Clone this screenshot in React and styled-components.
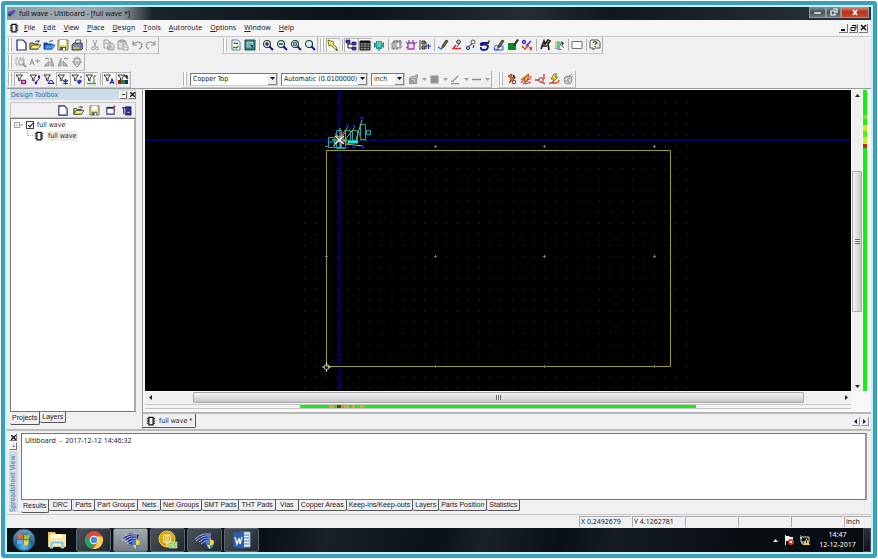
import { useState } from "react";
import styled, { createGlobalStyle, css } from "styled-components";

//All the small drawings of the toolbars, on a 12x12 grid:
const FUNNEL = <path d="M1 2h6.500L5 5v3L3.500 7.500V5z" fill="#fff" stroke="#222" strokeWidth=".9" />;
const PENCIL = <path d="M5 7l4-6 2 1-4 6-2 1z" fill="#6b6b14" stroke="#222" strokeWidth=".7" />;
const LENS = <><circle cx="5" cy="5" r="3.500" fill="#d5eff0" stroke="#233" strokeWidth="1.100" /><path d="M7.500 7.500l3.500 3.500" stroke="#16167a" strokeWidth="2" /></>;
const FOLDER = <><path d="M1 4h3l1 1h4v5H1z" fill="#e8dc4a" stroke="#333" /><path d="M1 10l2-4h9l-3 4z" fill="#f5ee78" stroke="#333" strokeWidth=".8" /><path d="M6 3q2-3 4 0M10 1v2H8" stroke="#333" fill="none" strokeWidth=".8" /></>;

const drawings = {
    page: <path d="M2 1h6l3 3v7H2z" fill="#fff" stroke="#22227c" strokeWidth="1.200" />,
    folder: FOLDER,
    blueFolder: <><path d="M1 4h3l1 1h4v5H1z" fill="#1d4fb8" stroke="#123c95" /><path d="M1 10l2-4h9l-3 4z" fill="#4c9bf0" stroke="#124abf" strokeWidth=".8" /><path d="M6 3q2-2 4-1" stroke="#1758c0" fill="none" /></>,
    save: <><path d="M1 1h10v10H1z" fill="#d8d868" stroke="#777" /><path d="M3 1h6v5H3z" fill="#fff" /><path d="M3 8h6v3H3z" fill="#555" /><path d="M6 9h2v2H6z" fill="#fff" /></>,
    print: <><path d="M4 5l1-4h5L9 5z" fill="#fff" stroke="#333" strokeWidth=".8" /><path d="M1 6l2-2h8l1 2v3l-2 2H1z" fill="#8888a4" stroke="#222" strokeWidth=".8" /><path d="M2 9h6" stroke="#e4e430" strokeWidth="1.200" /><path d="M9 7h2" stroke="#335ccc" /></>,
    cut: <g stroke="#9c9c9c" fill="none"><path d="M4 1l3 7M8 1L5 8" /><circle cx="4" cy="9.500" r="1.500" /><circle cx="8" cy="9.500" r="1.500" /></g>,
    copy: <g stroke="#9c9c9c" fill="#eee"><path d="M1 1h4l2 2v6H1zM5 4h4l2 2v5H5z" /><path d="M6 7h3M6 9h4M2 4h2" /></g>,
    paste: <g stroke="#9c9c9c" fill="#ddd"><path d="M1 2h8v8H1zM3 1h4v2H3z" /><path d="M6 5h3l2 2v4H6z" fill="#eee" /><path d="M7 8h3" /></g>,
    undo: <path d="M2 2v4h4M2 6c2-4 8-4 9 0 0 2-1 3-3 4" stroke="#8e8e8e" fill="none" strokeWidth="1.200" />,
    redo: <path d="M10 2v4H6M10 6C8 2 2 2 1 6c0 2 1 3 3 4" stroke="#9c9c9c" fill="none" strokeWidth="1.200" />,
    refresh: <><path d="M2 1h6l2 2v8H2z" fill="#fff" stroke="#678" /><path d="M4 5q1-2 3 0M8 7q-1 3-4 1" stroke="#0a8a22" fill="none" strokeWidth="1.400" /><path d="M6 5h2V3zM5 8H3v2z" fill="#0a8a22" /></>,
    screen: <><path d="M1 1h10v10H1z" fill="#2f7f7c" stroke="#1d4e50" /><path d="M3 3h6v5H3z" fill="#74b4ac" stroke="#bde" strokeWidth=".7" /><path d="M6 6h3v3z" fill="#234" /></>,
    zoomIn: <>{LENS}<path d="M3 5h4M5 3v4" stroke="#111" strokeWidth="1.200" /></>,
    zoomOut: <>{LENS}<path d="M3 5h4" stroke="#111" strokeWidth="1.200" /></>,
    zoomArea: <>{LENS}<path d="M3.500 3.500h3v3h-3z" fill="#7bb" stroke="#255" strokeWidth=".8" /></>,
    zoomAll: LENS,
    select: <><path d="M1 1l6 2-1 2 4 4-1 2-5-5-2 1z" fill="#f4ec5c" stroke="#5a5a18" strokeWidth=".8" /><path d="M9 11h2" stroke="#111" /></>,
    tree: <><path d="M3 3v6h5M3 5h5" stroke="#111" fill="none" /><path d="M1 1h4v3H1zM7 3h4v3H7zM7 8h4v3H7z" fill="#3a3aa8" stroke="#16165c" strokeWidth=".7" /></>,
    sheet: <><path d="M1 2h10v9H1z" fill="#888" stroke="#111" /><path d="M1 3h10" stroke="#111" strokeWidth="2" /><path d="M1 6h10M1 8.500h10M4 3v8M8 3v8" stroke="#222" strokeWidth=".8" /></>,
    chip: <><path d="M3 2h6v8H3zM1 4h10v4H1z" fill="#23a196" /><path d="M4 3h4v5H4z" fill="#58c8bb" /><path d="M1 4h1M10 4h1M1 8h1M10 8h1M5 11h2" stroke="#246" /></>,
    partGray: <><path d="M1 4l3-2h6v7H4L1 10z" fill="#b4b4b4" stroke="#8c8c8c" /><path d="M3 1v3M6 1v3M9 1v3M3 9v2M6 9v2" stroke="#777" /><path d="M6 4h2v4H6z" fill="#eee" /></>,
    partPink: <><path d="M3 4h6v6H3z" fill="#f5d9f7" stroke="#9c42b8" strokeWidth="1.300" /><path d="M4 1v3M8 1v3M1 3l2 2M9 5l3-2M3 8L1 9" stroke="#60307a" /></>,
    partPlus: <><path d="M1 1v10M3 2h3v3H3zM3 7h3v3H3z" fill="#9a9a38" stroke="#333" /><path d="M6 3h1v7" stroke="#333" fill="none" /><path d="M7 7h5M9.500 5v5" stroke="#2733b8" strokeWidth="1.200" /></>,
    line: <>{PENCIL}<path d="M1 8l3 2 2-2" stroke="#245fd4" fill="none" strokeWidth="1.300" /></>,
    polyRed: <><circle cx="7.500" cy="3" r="2" fill="#aaa" stroke="#555" /><path d="M5 6L2 9.500h8" stroke="#da2727" fill="none" strokeWidth="1.400" /><path d="M8 5L6 8" stroke="#555" /></>,
    link: <><circle cx="8" cy="3" r="2" fill="#eee" stroke="#555" /><path d="M7 5L4 7M9 6L8 9" stroke="#334" /><circle cx="3" cy="9" r="1.700" fill="#7db4d8" stroke="#348" /></>,
    swirl: <><path d="M10 4H4Q1 4 2 6q5-1 7 1 0 4-4 4-4 0-3-3" stroke="#161c8c" fill="none" strokeWidth="1.800" /><path d="M7 5l3-4 1 1-3 4z" fill="#333" /></>,
    shapePen: <>{PENCIL}<path d="M1 10c0-4 4-5 4-2v3z M6 7h4v4H1" stroke="#3c4dca" fill="none" /></>,
    copperPen: <><path d="M1 4h8v7H1z" fill="#078a20" /><path d="M6 6l4-6 2 1-4 6z" fill="#333" /></>,
    netCheck: <><circle cx="3" cy="3" r="1.500" fill="none" stroke="#2222cf" strokeWidth="1.300" /><path d="M10 2L5 7" stroke="#2222cf" strokeWidth="1.300" /><path d="M1 7l3 3 4-4M8 8l3 3M11 8l-2 3" stroke="#e03030" fill="none" strokeWidth="1.300" /></>,
    textPen: <><path d="M2 10L5 2l1 3 3-4 2 1-2 3 1 6M3 7h5" stroke="#181818" fill="none" strokeWidth="1.600" /><path d="M6 7l4-6" stroke="#777730" /></>,
    colors: <><path d="M2 2h3v7H2z" fill="#d6d64a" /><path d="M4 2l4 1-1 6-3 1z" fill="#4cc0cd" /><path d="M8 2l3 2-2 3z" fill="#333" /><path d="M1 9l8 1-2 1z" fill="#3a42c8" /><path d="M7 5l4 4" stroke="#777" /></>,
    rect: <path d="M1 2.500h10v7H1z" fill="#fafafa" stroke="#777" />,
    help: <><path d="M2 1h7l2 2v6H6l-2 2V9H1V2z" fill="#f4f4d8" stroke="#333" strokeWidth=".8" /><path d="M4 4q2-3 4 0-2 1-2 2M6 7v1" stroke="#23234a" fill="none" strokeWidth="1.100" /></>,
    findGray: <g stroke="#9a9a9a" fill="none"><path d="M1 2h8v7H1z" strokeDasharray="2 1" /><circle cx="6" cy="6" r="2.500" /><path d="M8 8l3 3" strokeWidth="2" /></g>,
    aPlus: <path d="M1 9l2-6 2 6M2 7h3M6 5h5M8.500 3v4" stroke="#959595" fill="none" />,
    flipA: <><path d="M1 10h5V5z M8 10V2l3 8z" fill="#bbb" stroke="#8e8e8e" strokeWidth=".8" /><path d="M2 3q2-2 4 0" stroke="#888" fill="none" /></>,
    flipB: <><path d="M1 10l3-8v8zM6 10h5L6 5z" fill="#bbb" stroke="#8e8e8e" strokeWidth=".8" /><path d="M7 3q2-2 4 0" stroke="#888" fill="none" /></>,
    rotate: <g fill="none" stroke="#929292"><path d="M3 3l3-2 3 2v5l-3 3-3-3z" /><path d="M1 6h10M3 3h6M3 8h6" /></g>,
    fPart: <>{FUNNEL}<path d="M6.500 7.500h4v3h-4z" stroke="#8c1c6d" fill="#f3d0e8" strokeWidth="1.300" /></>,
    fNet: <>{FUNNEL}<path d="M10 2v4l-3 3" stroke="#e02f72" fill="none" strokeWidth="1.200" /><circle cx="10" cy="4" r="1.200" fill="#2020c0" /><circle cx="7" cy="10" r="1.400" fill="#2020c0" /></>,
    fPoly: <>{FUNNEL}<path d="M5 10.500l2-3h2l2 3z" stroke="#22229f" fill="#cfd4ff" /></>,
    fVia: <>{FUNNEL}<path d="M8.500 6v5.500M6 7.500l5 3M11 7.500l-5 3" stroke="#1f1fb0" strokeWidth="1.400" /></>,
    fPad: <>{FUNNEL}<path d="M6 8q3-3 5 0l-2 3H7z" fill="#2a36c4" /><path d="M9 4h2" stroke="#1f1fb0" /></>,
    fGreen: <>{FUNNEL}<path d="M11 3H9v7" stroke="#555" fill="none" /><path d="M2 10.500h9" stroke="#18c018" strokeWidth="1.500" /></>,
    fText: <>{FUNNEL}<path d="M7 11l2-5 2 5M8 9.500h3" stroke="#1c1cae" fill="none" strokeWidth="1.100" /></>,
    fColors: <>{FUNNEL}<path d="M7 2l4 4M9 2l2 2" stroke="#333" strokeWidth="1.300" /><path d="M1 7h3v4H1z" fill="#a51616" /><path d="M4 7h4v4H4z" fill="#079326" /><path d="M8 7h3v4H8z" fill="#1a258f" /></>,
    pasteGray: <><path d="M1 4h9v7H1z" fill="#9a9a9a" /><path d="M3 3h4l3-2v3" stroke="#888" fill="none" strokeWidth="1.300" /><path d="M4 6h3v3" stroke="#ddd" fill="none" /></>,
    squareGray: <path d="M2 2h8v8H2z" fill="#909090" stroke="#a8a8a8" />,
    lineGray: <path d="M1 10.500h9M3 8l6-6M1 8h3" stroke="#8c8c8c" strokeWidth="1.400" />,
    dashGray: <path d="M1 6h10" stroke="#8c8c8c" strokeWidth="1.600" />,
    routeA: <><path d="M2 3l4-2-1 3 4 1-6 5 2-4z" fill="#d88a20" stroke="#8a2a14" strokeWidth=".8" /><path d="M7 2l2 3" stroke="#111" strokeWidth="1.500" /><circle cx="8" cy="9" r="1.800" fill="none" stroke="#8a2020" /></>,
    routeB: <><path d="M1 10L6 4M3 11l6-5M5 11l6-2M1 7l8-6M6 4h6M7 6h4" stroke="#e2301f" strokeWidth="1.100" /><path d="M5 4l4-2-2 5-3 2z" fill="#e8c12a" stroke="#863" strokeWidth=".7" /></>,
    routeC: <><path d="M1 7h4M8 9l3 2M10 1v5" stroke="#d93030" strokeWidth="1.300" /><circle cx="7" cy="7" r="2.300" fill="#ddd" stroke="#933" /></>,
    routeD: <><path d="M1 10h6q4 0 4-3" stroke="#e23b2a" fill="none" strokeWidth="1.300" /><path d="M6 1L3 6h3l-2 4 6-6H7l2-3z" fill="#eee03a" stroke="#6d5a12" strokeWidth=".8" /></>,
    routeE: <g stroke="#8f8f8f" fill="#ddd"><circle cx="6" cy="7" r="4" /><path d="M4 5l6-4M5 7l6-4M3 8h4v2" fill="none" /></g>,
    target: <><path d="M2 3h8v7H2z" fill="#fff" stroke="#33338c" strokeWidth="1.200" /><path d="M2 3h8" stroke="#22227c" strokeWidth="2" /><path d="M9 3l2-2" stroke="#d33" strokeWidth="2" /></>,
    treeBlue: <><path d="M1 3h4M3 3v7" stroke="#22227c" strokeWidth="1.300" /><path d="M5 2h6v3H5zM5 6h6v5H5z" fill="#2c2ca8" stroke="#151560" strokeWidth=".8" /><path d="M7 8h2" stroke="#fff" /></>,
    board: <><path d="M3.500 1.500h5v9h-5z" fill="#fff" stroke="#111" strokeWidth="1.500" /><path d="M1 3h2M1 5h2M1 7h2M1 9h2M9 3h2M9 5h2M9 7h2M9 9h2" stroke="#111" /></>,
    logo: <><path d="M1 8l10-6M1 5l9-3M3 10l7-6" stroke="#4453b4" strokeWidth="1.500" /><path d="M1 6h4v3H2z" fill="#262c8c" /></>,
};

const Icon = ({ name, size = 12 }) => (
    <svg width={size} height={size} viewBox="0 0 12 12" fill="none" aria-hidden="true">{drawings[name]}</svg>
);

//A "|" is a separator, a "*" at the end is a pressed button:
const fileTools = ["page", "folder", "blueFolder", "save", "print", "|", "cut", "copy", "paste", "undo", "redo"];
const viewTools = ["refresh", "screen", "|", "zoomIn", "zoomOut", "zoomArea", "zoomAll"];
const mainTools = ["select*", "|", "tree*", "sheet*", "chip", "|", "partGray", "partPink", "partPlus", "|", "line", "polyRed", "link", "swirl", "shapePen", "copperPen", "netCheck", "|", "textPen", "colors", "|", "rect", "|", "help"];
const editTools = ["findGray", "aPlus", "flipA", "flipB", "rotate"];
const filterTools = ["fPart*", "fNet", "fPoly", "fVia*", "fPad*", "fGreen*", "|", "fText*", "fColors*"];
const drawTools = ["pasteGray", "squareGray", "lineGray", "dashGray"];
const routeTools = ["routeA", "routeB", "routeC", "routeD", "routeE"];

const menus = ["File", "Edit", "View", "Place", "Design", "Tools", "Autoroute", "Options", "Window", "Help"];
const sheetTabs = ["Results", "DRC", "Parts", "Part Groups", "Nets", "Net Groups", "SMT Pads", "THT Pads", "Vias", "Copper Areas", "Keep-ins/Keep-outs", "Layers", "Parts Position", "Statistics"];

const Tools = ({ items }) => items.map((item, i) => {
    const name = item.replace("*", "");
    return item === "|"
        ? <Separator key={i} />
        : <ToolButton key={i} aria-label={name} $pressed={item.endsWith("*")}><Icon name={name} /></ToolButton>;
});

const Combo = ({ label, width, options }) => (
    <ComboBox $width={width}>
        <select aria-label={label}>
            {options.map(option => <option key={option}>{option}</option>)}
        </select>
        <ComboArrow><svg width="5" height="3" viewBox="0 0 5 3"><path d="M0 0h5L2.500 3z" fill="#111" /></svg></ComboArrow>
    </ComboBox>
);

const Triangle = ({ dir, color = "#222" }) => {
    const paths = { up: "M0 4h5L2.500 1z", down: "M0 1h5L2.500 4z", left: "M4 0v5L1 2.500z", right: "M1 0v5l3-2.500z" };
    return <svg width="5" height="5" viewBox="0 0 5 5" aria-hidden="true"><path d={paths[dir]} fill={color} /></svg>;
};

const Cross = () => (
    <svg width="5" height="5" viewBox="0 0 5 5" aria-hidden="true"><path d="M0 0l5 5M5 0L0 5" stroke="#111" strokeWidth="1.300" /></svg>
);

//The board: grid dots, outline, crosshair and the parts that are not placed yet.
const BoardCanvas = () => {
    const dots = [];
    for (let row = 0; row < 27; row++) {
        for (let col = 0; col < 36; col++) {
            dots.push(<rect key={`${row}-${col}`} x={159 + col * 10.93} y={12 + row * 10.98} width="1" height="1" />);
        }
    }
    return (
        <svg width="100%" height="100%" role="img" aria-label="Board">
            <g fill="#3c3c3c">{dots}</g>
            <path d="M0 50h2000" stroke="#000064" strokeWidth="2" />
            <path d="M194.500 0v1000" stroke="#000080" strokeWidth="2" />
            <path d="M181.500 60.500h344v216h-344z" stroke="#9c9c2a" fill="none" />
            <g stroke="#777" strokeWidth="1">
                {[290, 399, 509].map(x => [56, 166, 276].map(y => (
                    <path key={`${x}-${y}`} d={`M${x - 1} ${y + .5}h3M${x + .5} ${y - 1}v3`} />
                )))}
                <path d="M180 56.500h3M180 166.500h3" />
            </g>
            <g fill="none" stroke="#12a8b0">
                <path d="M183.500 47.500h6v10h-6zM184 52h5M191.500 51.500h4v7h-4zM196.500 51.500h4v7h-4zM191.500 40.500h5v6h-5z" />
                <path d="M200.500 40.500h5v10h-5zM207.500 40.500h5v10h-5zM215.500 34.500h5v15h-5zM221.500 40.500h4v4h-4z" />
                <path d="M183.500 57.500h18M198 48l4 3" />
                <path d="M203 52h10" stroke="#2fe0c4" strokeWidth="3" />
                <path d="M214 42l2 9M187 50h4v5M218 50h4" stroke="#14944c" />
            </g>
            <path d="M188 56l13-14M190 44l14 10M195 38v21M195 47l8-10M200 50l10-13M211 50l6-20M200 54l18 2M187 50h15" stroke="#b5ae68" fill="none" />
            <path d="M190 46l9 8M199 46l-9 8" stroke="#fff" strokeWidth="1.300" />
            <g fill="#1616b4">
                <circle cx="217" cy="28" r="1.800" /><circle cx="209" cy="36" r="1.500" /><circle cx="202" cy="36" r="1.500" />
                <circle cx="202" cy="57" r="1.800" /><circle cx="209" cy="57" r="1.800" /><circle cx="218" cy="57" r="1.800" />
            </g>
            <circle cx="181.500" cy="277" r="2.500" stroke="#ccc" fill="none" />
            <path d="M177 277h3M183 277h3M181.500 272v3M181.500 279v3" stroke="#ccc" />
        </svg>
    );
};

const UltiboardIcon = () => (
    <svg width="22" height="20" viewBox="0 0 22 20" aria-hidden="true">
        <path d="M2 8l9-5 8 2-4 10-6-1-2-4z" fill="#26348e" />
        <path d="M1 9q6-6 16-5M2 11q6-6 15-5M5 12q5-5 12-4M7 14q4-4 9-4" stroke="#c3cbee" strokeWidth=".9" fill="none" />
        <path d="M9 3l7 11M5 6l7 9" stroke="#4656ac" />
        <path d="M12 11l4-2 4 2q0 6-4 8-4-2-4-8z" fill="#3d86d8" />
        <path d="M16 9l4 2q0 2-1 4h-3zM16 15v4q-2-1-3-4z" fill="#f0d33a" />
    </svg>
);

const App = () => {
    const [sheetTab, setSheetTab] = useState("Results");

    return (
        <>
        <GlobalStyle />
        <Frame>
            <TitleBar>
                <Icon name="logo" size={9} />
                <Title>full wave - Ultiboard - [full wave *]</Title>
                <WindowButtons>
                    <WindowButton aria-label="Minimize" $width={17}><svg width="9" height="7" viewBox="0 0 9 7"><path d="M1 3h7v2H1z" fill="#fff" stroke="#444" strokeWidth=".5" /></svg></WindowButton>
                    <WindowButton aria-label="Restore" $width={15}><svg width="8" height="8" viewBox="0 0 8 8"><path d="M3 1h4v4M1 3h4v4H1z" stroke="#fff" fill="none" strokeWidth="1.200" /></svg></WindowButton>
                    <WindowButton aria-label="Close" $width={28} $close><svg width="8" height="7" viewBox="0 0 8 7"><path d="M2 1l4 5M6 1L2 6" stroke="#fff" strokeWidth="1.700" /></svg></WindowButton>
                </WindowButtons>
            </TitleBar>
            <MenuBar>
                <Icon name="board" size={10} />
                {menus.map(menu => (
                    <MenuButton key={menu}><u>{menu[0]}</u>{menu.slice(1)}</MenuButton>
                ))}
                <Spacer />
                <ChildButton aria-label="Minimize document"><svg width="7" height="7" viewBox="0 0 7 7"><path d="M1 5h4v2H1z" fill="#111" /></svg></ChildButton>
                <ChildButton aria-label="Restore document"><svg width="7" height="7" viewBox="0 0 7 7"><path d="M2 1.500h4v3M1 3.500h4v3H1z" stroke="#111" fill="none" /></svg></ChildButton>
                <ChildButton aria-label="Close document"><svg width="7" height="7" viewBox="0 0 7 7"><path d="M1 1l5 5M6 1L1 6" stroke="#111" strokeWidth="1.500" /></svg></ChildButton>
            </MenuBar>
            <ToolRow>
                <ToolGroup><Grip /><Tools items={fileTools} /></ToolGroup>
                <RowGap $width={63} />
                <ToolGroup><Grip /><Tools items={viewTools} /></ToolGroup>
                <RowGap $width={1} />
                <ToolGroup><Grip /><Tools items={mainTools} /></ToolGroup>
            </ToolRow>
            <ToolRow>
                <ToolGroup><Grip /><Tools items={editTools} /></ToolGroup>
            </ToolRow>
            <ToolRow>
                <ToolGroup><Grip /><Tools items={filterTools} /></ToolGroup>
                <RowGap $width={51} />
                <ToolGroup>
                    <Grip />
                    <Combo label="Layer" width={88} options={["Copper Top", "Copper Bottom"]} />
                    <Combo label="Line width" width={87} options={["Automatic (0.0100000)"]} />
                    <Combo label="Unit" width={34} options={["inch", "mm", "mil"]} />
                    {drawTools.map(name => (
                        <DropTool key={name} aria-label={name}>
                            <Icon name={name} size={11} />
                            <Triangle dir="down" color="#a0a0a0" />
                        </DropTool>
                    ))}
                </ToolGroup>
                <RowGap $width={6} />
                <ToolGroup><Grip /><Tools items={routeTools} /></ToolGroup>
            </ToolRow>
            <Workspace>
                <Toolbox>
                    <ToolboxHeader>
                        <h2>Design Toolbox</h2>
                        <TinyButton aria-label="Roll up"><svg width="5" height="5" viewBox="0 0 5 5"><path d="M1 2.500h3" stroke="#333" /></svg></TinyButton>
                        <TinyButton aria-label="Close toolbox"><Cross /></TinyButton>
                    </ToolboxHeader>
                    <ToolboxTools>
                        {["page", "folder", "save", "target", "treeBlue"].map(name => (
                            <ToolButton key={name} aria-label={name} $wide><Icon name={name} size={11} /></ToolButton>
                        ))}
                    </ToolboxTools>
                    <Tree>
                        <TreeRow>
                            <svg width="9" height="6" viewBox="0 0 9 6" aria-hidden="true"><path d="M.5.5h5v5h-5zM2 3h2M6 3h3" stroke="#999" fill="none" /></svg>
                            <CheckBox type="checkbox" id="project" defaultChecked />
                            <label htmlFor="project">full wave</label>
                        </TreeRow>
                        <TreeRow $child>
                            <Branch />
                            <Icon name="board" size={10} />
                            <Leaf>full wave</Leaf>
                        </TreeRow>
                    </Tree>
                    <TabRow>
                        <Tab $active>Projects</Tab>
                        <Tab>Layers</Tab>
                    </TabRow>
                </Toolbox>
                <Editor>
                    <CanvasGrid>
                        <CanvasArea><BoardCanvas /></CanvasArea>
                        <VScroll>
                            <ScrollButton aria-label="Scroll up"><Triangle dir="up" /></ScrollButton>
                            <Track $grow={71} />
                            <Thumb $grow={140} $vertical><ThumbGrip $vertical /></Thumb>
                            <Track $grow={70} />
                            <ScrollButton aria-label="Scroll down"><Triangle dir="down" /></ScrollButton>
                        </VScroll>
                        <VDensity />
                        <HScroll>
                            <ScrollButton aria-label="Scroll left"><Triangle dir="left" /></ScrollButton>
                            <Track $grow={38} />
                            <Thumb $grow={611}><ThumbGrip /></Thumb>
                            <Track $grow={37} />
                            <ScrollButton aria-label="Scroll right"><Triangle dir="right" /></ScrollButton>
                        </HScroll>
                        <HDensity />
                    </CanvasGrid>
                    <DocumentTabs>
                        <DocumentTab><Icon name="board" size={10} />full wave *</DocumentTab>
                        <Spacer />
                        <NavButton aria-label="Previous"><Triangle dir="left" color="#16166c" /></NavButton>
                        <NavButton aria-label="Next"><Triangle dir="right" color="#16166c" /></NavButton>
                    </DocumentTabs>
                </Editor>
            </Workspace>
            <Spreadsheet>
                <SideStrip>
                    <TinyButton aria-label="Close spreadsheet"><Cross /></TinyButton>
                    <TinyButton aria-label="Collapse spreadsheet"><svg width="5" height="5" viewBox="0 0 5 5"><path d="M2 2h1v1" stroke="#333" /></svg></TinyButton>
                    <SideTitle>Spreadsheet View</SideTitle>
                </SideStrip>
                <SheetBody>
                    <Results>Ultiboard&nbsp; -&nbsp; 2017-12-12 14:46:32</Results>
                    <TabRow>
                        {sheetTabs.map(tab => (
                            <Tab key={tab} $active={tab === sheetTab} onClick={() => setSheetTab(tab)}>{tab}</Tab>
                        ))}
                    </TabRow>
                </SheetBody>
            </Spreadsheet>
            <StatusBar>
                <StatusCell $width={52}>X 0.2492679</StatusCell>
                <StatusCell $width={52}>Y 4.1262781</StatusCell>
                <StatusCell $width={52} />
                <StatusCell $width={52} />
                <StatusCell $width={52} />
                <StatusCell $width={27}>inch</StatusCell>
            </StatusBar>
            <Taskbar>
                <StartButton aria-label="Start">
                    <svg width="24" height="24" viewBox="0 0 24 24">
                        <defs>
                            <radialGradient id="orb" cx=".5" cy=".8" r=".8">
                                <stop offset="0" stopColor="#4fc4ee" /><stop offset=".5" stopColor="#1f639c" /><stop offset="1" stopColor="#7ea6c0" />
                            </radialGradient>
                        </defs>
                        <circle cx="12" cy="12" r="11" fill="url(#orb)" stroke="#26465c" />
                        <path d="M6 7q3-2 5 0v4q-3-1-6 0z" fill="#ee6b2c" />
                        <path d="M12 7q3 1 6-1l-1 5q-2 1-5 0z" fill="#8fc83c" />
                        <path d="M5 12q3-1 6 0v5q-3-2-6 0z" fill="#5aa9ea" />
                        <path d="M12 12q3 1 5 0l-1 5q-2 1-4 0z" fill="#f6cf3a" />
                    </svg>
                </StartButton>
                <TaskButton aria-label="Explorer" $plain>
                    <svg width="20" height="20" viewBox="0 0 20 20">
                        <path d="M1 2h7l1 2h10v13H1z" fill="#e9c86a" /><path d="M2 5h17v11H2z" fill="#f8e8a4" />
                        <path d="M4 4h11v4H4z" fill="#fff8d8" /><path d="M3 18v-5q0-2 2-2h10q2 0 2 2v5h-3v-4H6v4z" fill="#8cc7e8" stroke="#d8f0fa" strokeWidth=".7" />
                    </svg>
                </TaskButton>
                <TaskButton aria-label="Chrome">
                    <svg width="20" height="20" viewBox="0 0 20 20">
                        <circle cx="10" cy="10" r="9" fill="#dd4b3e" />
                        <path d="M2.200 5.500L6.500 12l3.500 2-2 5A9 9 0 0 1 2.200 5.500z" fill="#1fa463" />
                        <path d="M18.300 6.500H10l4 5.500-5 7A9 9 0 0 0 18.300 6.500z" fill="#fdd04a" />
                        <circle cx="10" cy="10" r="4.300" fill="#fff" /><circle cx="10" cy="10" r="3.300" fill="#4688f1" />
                    </svg>
                </TaskButton>
                <TaskButton aria-label="Ultiboard" $active><UltiboardIcon /></TaskButton>
                <TaskButton aria-label="Multisim">
                    <svg width="20" height="20" viewBox="0 0 20 20">
                        <circle cx="9" cy="9" r="8" fill="#d9a40d" stroke="#f3cf48" />
                        <path d="M5.500 5h7v5q0 3-3.500 3t-3.500-3zM8 5v8M10 5v8M9 13v4" stroke="#fff3c0" fill="none" />
                        <path d="M11 12h8v6h-8z" fill="#8fca62" stroke="#def0c8" strokeWidth=".6" /><path d="M11 15h8M15 12v6" stroke="#d5edc0" strokeWidth=".6" />
                    </svg>
                </TaskButton>
                <TaskButton aria-label="Ultiboard project"><UltiboardIcon /></TaskButton>
                <TaskButton aria-label="Word">
                    <svg width="20" height="20" viewBox="0 0 20 20">
                        <path d="M8 2h10v15H8z" fill="#f4f8ff" stroke="#7d9fd8" /><path d="M12 5h5M12 8h5M12 11h5M12 14h5" stroke="#3d68ba" />
                        <path d="M1 3l11-2v18L1 17z" fill="#2b5cb0" /><path d="M3 7l2 7 2-6 1 6 2-7" stroke="#fff" fill="none" strokeWidth="1.300" />
                    </svg>
                </TaskButton>
                <Spacer />
                <Tray>
                    <Triangle dir="up" color="#eee" />
                    <svg width="10" height="10" viewBox="0 0 10 10"><path d="M1.500 0v10" stroke="#eee" /><path d="M2 1h3l1 1h3v4H2z" fill="#f2f2f2" /><circle cx="7" cy="7" r="3" fill="#d8342c" /><path d="M6 6l2 2M8 6L6 8" stroke="#fff" /></svg>
                    <svg width="10" height="10" viewBox="0 0 10 10"><path d="M1 2h8v5H1zM2 7v2h3" stroke="#ddd" fill="none" /><path d="M0 0v3h2" stroke="#ddd" fill="none" /><path d="M6.500 3L10 10H3z" fill="#f3d22c" /><path d="M6.500 5v3" stroke="#222" /></svg>
                    <Clock><span>14:47</span><span>12-12-2017</span></Clock>
                    <ShowDesktop aria-label="Show desktop" />
                </Tray>
            </Taskbar>
        </Frame>
        </>
    );
};

export default App;

const UI_FONT = `"DejaVu Sans Condensed", "DejaVu Sans", sans-serif`;
const SEGOE_FONT = `"Noto Sans", "Open Sans", sans-serif`;
const SMALL_FONT = `"Liberation Sans", Arial, sans-serif`;

const GlobalStyle = createGlobalStyle`
    * {
        box-sizing: border-box;
    }
    body {
        margin: 0;
        background: #fff;
        color: #222;
        font: 7px/10px ${UI_FONT};
    }
    button, select, input {
        font: inherit;
        color: inherit;
        margin: 0;
        padding: 0;
    }
    button {
        border: 0;
        background: none;
        display: flex;
        align-items: center;
        justify-content: center;
        white-space: nowrap;
    }
    svg {
        display: block;
        flex: none;
    }
`;

const Frame = styled.div`
    display: flex;
    flex-direction: column;
    min-height: calc(100vh - 2px);
    margin: 1px;
    padding: 2px;
    border: 4px solid #3a9fb8;
    border-radius: 3px;
    background-color: #c9eef5;
`;

const Spacer = styled.div`
    flex: 1;
`;

const TitleBar = styled.header`
    display: flex;
    align-items: center;
    gap: 3px;
    height: 13px;
    background: linear-gradient(90deg, #8e9aa3 0, #a4adb5 70px, #8a949c 115px, #1b242b 145px, #0b1218 40%, #252d33 60%, #10171d 70%, #2d363d 100%);
`;

const Title = styled.h1`
    flex: 1;
    margin: 0;
    font: 7px/10px ${SEGOE_FONT};
    color: #10151a;
`;

const WindowButtons = styled.div`
    display: flex;
    align-self: flex-start;
    margin-right: 2px;
`;

const WindowButton = styled.button`
    width: ${props => props.$width}px;
    height: 11px;
    border: 1px solid #8f989e;
    border-top: 0;
    background: ${props => props.$close
        ? "linear-gradient(#d88c7e, #b8321c 50%, #c8492e)"
        : "linear-gradient(#84909a, #46525c 50%, #6b7780)"};
`;

const MenuBar = styled.nav`
    display: flex;
    align-items: center;
    gap: 8px;
    height: 17px;
    padding: 0 3px 0 2px;
    border-bottom: 1px solid #c9c9c9;
    background-color: #f5f5f5;
`;

const MenuButton = styled.button`
    height: 14px;
    font-family: ${SEGOE_FONT};
    &:first-of-type {
        margin-left: -3px;
    }
`;

const ChildButton = styled.button`
    width: 9px;
    height: 9px;
    margin-left: -7px;
    border-right: 1px solid #777;
    border-bottom: 1px solid #777;
    background-color: #f0f0f0;
`;

const ToolRow = styled.div`
    display: flex;
    height: 17px;
    background-color: #f0f0f0;
`;

const ToolGroup = styled.div`
    display: flex;
    align-items: center;
    height: 17px;
    border-right: 1px solid #b4b4b4;
    border-bottom: 1px solid #c6c6c6;
`;

const RowGap = styled.div`
    width: ${props => props.$width}px;
`;

const Grip = styled.span`
    width: 4px;
    height: 14px;
    margin: 0 2px 0 1px;
    border: 1px solid #b8b8b8;
    border-top: 0;
    border-bottom: 0;
    background-color: #fff;
`;

const Separator = styled.span`
    width: 1px;
    height: 12px;
    margin: 0 1px 0 2px;
    background-color: #b0b0b0;
`;

const ToolButton = styled.button`
    width: ${props => props.$wide ? 16 : 14}px;
    height: 14px;
    ${props => props.$pressed && css`
        background-color: #f9f9f9;
        box-shadow: inset 1px 1px #b4b4b4, inset -1px -1px #e4e4e4;
    `}
`;

const DropTool = styled.button`
    width: 21px;
    height: 14px;
    gap: 3px;
`;

const ComboBox = styled.div`
    display: flex;
    width: ${props => props.$width}px;
    height: 13px;
    margin: 0 2px 0 1px;
    border: 1px solid #777;
    border-right-color: #ccc;
    border-bottom-color: #ccc;
    background-color: #fff;
    select {
        flex: 1;
        min-width: 0;
        padding-left: 2px;
        border: 0;
        background: none;
        appearance: none;
        text-overflow: clip;
    }
`;

const ComboArrow = styled.span`
    display: flex;
    align-items: center;
    justify-content: center;
    width: 9px;
    border-right: 1px solid #888;
    border-bottom: 1px solid #888;
    background-color: #eee;
    pointer-events: none;
`;

const Workspace = styled.main`
    flex: 1;
    display: flex;
    gap: 6px;
    border-top: 1px solid #9a9a9a;
    border-bottom: 2px solid #bcbcbc;
    background-color: #f0f0f0;
`;

const Toolbox = styled.aside`
    display: flex;
    flex-direction: column;
    width: 129px;
    padding: 0 0 5px 3px;
`;

const ToolboxHeader = styled.div`
    display: flex;
    align-items: center;
    gap: 1px;
    height: 11px;
    margin-bottom: 2px;
    background-color: #cbdcea;
    h2 {
        flex: 1;
        margin: 0;
        padding-left: 1px;
        font: 7px/10px ${UI_FONT};
        color: #4f6a84;
    }
`;

const TinyButton = styled.button`
    width: 8px;
    height: 8px;
    border: 1px solid #fff;
    border-right-color: #777;
    border-bottom-color: #777;
    background-color: #f0f0f0;
`;

const ToolboxTools = styled.div`
    display: flex;
    justify-content: flex-end;
    height: 16px;
    padding-right: 1px;
    border: 1px solid #c4c4c4;
`;

const Tree = styled.div`
    flex: 1;
    border: 1px solid #777;
    border-right: 2px solid #aaa;
    background-color: #fff;
`;

const TreeRow = styled.div`
    display: flex;
    align-items: center;
    gap: 3px;
    height: 11px;
    padding-left: ${props => props.$child ? 16 : 3}px;
`;

const CheckBox = styled.input`
    display: flex;
    align-items: center;
    justify-content: center;
    width: 8px;
    height: 8px;
    border: 1px solid #444;
    appearance: none;
    background-color: #fff;
    &:checked::after {
        content: "";
        width: 2px;
        height: 4px;
        border: solid #111;
        border-width: 0 1px 1px 0;
        transform: rotate(40deg);
    }
`;

const Branch = styled.span`
    width: 6px;
    height: 6px;
    margin-right: -2px;
    border: 1px dotted #aaa;
    border-top: 0;
    border-right: 0;
    align-self: flex-start;
`;

const Leaf = styled.span`
    padding: 0 1px;
    background-color: #ececec;
`;

const TabRow = styled.div`
    display: flex;
    height: 12px;
`;

const Tab = styled.button`
    height: ${props => props.$active ? 13 : 11}px;
    min-width: 23px;
    padding: 0 2px;
    border-right: 1px solid #555;
    border-bottom: 1px solid #555;
    border-radius: 0 0 2px 2px;
    font: 7px/10px ${SMALL_FONT};
    background-color: #f0f0f0;
`;

const Editor = styled.section`
    flex: 1;
    display: flex;
    flex-direction: column;
    min-width: 0;
    border-left: 1px solid #9a9a9a;
`;

const CanvasGrid = styled.div`
    flex: 1;
    display: grid;
    grid-template-columns: 1fr 10px 4px;
    grid-template-rows: 1fr 11px 5px;
    column-gap: 1px;
    row-gap: 1px;
    padding: 1px 4px 3px 2px;
    border-bottom: 2px solid #b4b4b4;
    background-color: #f8f8f8;
`;

const CanvasArea = styled.div`
    position: relative;
    overflow: hidden;
    background-color: #000;
    svg {
        position: absolute;
        inset: 0;
    }
`;

const VScroll = styled.div`
    display: flex;
    flex-direction: column;
    background-color: #efefef;
`;

const HScroll = styled.div`
    display: flex;
    grid-column: 1;
    background-color: #efefef;
`;

const ScrollButton = styled.button`
    flex: 0 0 10px;
`;

const Track = styled.div`
    flex: ${props => props.$grow} 1 0;
`;

const Thumb = styled.div`
    flex: ${props => props.$grow} 1 0;
    display: flex;
    align-items: center;
    justify-content: center;
    border: 1px solid #a8a8a8;
    border-radius: 1px;
    background: linear-gradient(${props => props.$vertical ? "90deg" : "180deg"}, #f4f4f4, #c8c8cc);
`;

const ThumbGrip = styled.span`
    width: 5px;
    height: 5px;
    background: repeating-linear-gradient(${props => props.$vertical ? 0 : 90}deg, #666 0 1px, #eee 1px 2px);
`;

const VDensity = styled.div`
    background: linear-gradient(
        #14ef14 25px, #6cf01c 25px 29px, #14ef14 29px 35px, #c8f020 35px 41px, #50f01c 41px 47px,
        #c8f020 47px 54px, #e01c10 54px 58px, #14ef14 58px
    );
`;

const HDensity = styled.div`
    grid-column: 1;
    border: 1px solid #c4c4c4;
    border-left: 0;
    border-right: 0;
    background: linear-gradient(
        90deg, #f4f4f4 22%, #14ef14 22% 26%, #e0a428 26% 26.7%, #14ef14 26.7% 27.2%, #cc1414 27.2% 27.8%,
        #14ef14 27.8% 28.2%, #e0a428 28.2% 28.9%, #14ef14 28.9% 29.3%, #e0a428 29.3% 29.8%, #14ef14 29.8% 30.4%,
        #e0a428 30.4% 31%, #14ef14 31% 78%, #f4f4f4 78%
    ) border-box;
`;

const DocumentTabs = styled.div`
    display: flex;
    align-items: center;
    gap: 1px;
    height: 15px;
    padding-right: 2px;
`;

const DocumentTab = styled.button`
    gap: 3px;
    height: 14px;
    align-self: flex-start;
    padding: 0 3px 0 3px;
    border-right: 1px solid #555;
    border-bottom: 1px solid #555;
    border-radius: 0 0 2px 0;
`;

const NavButton = styled.button`
    width: 8px;
    height: 9px;
    border-right: 1px solid #999;
    border-bottom: 1px solid #999;
`;

const Spreadsheet = styled.section`
    display: flex;
    gap: 3px;
    height: 84px;
    padding: 2px 4px 2px 2px;
    border-bottom: 1px solid #c8c8c8;
    background-color: #f0f0f0;
`;

const SideStrip = styled.div`
    display: flex;
    flex-direction: column;
    gap: 1px;
    width: 9px;
`;

const SideTitle = styled.h2`
    flex: 1;
    margin: 0;
    writing-mode: vertical-rl;
    transform: rotate(180deg);
    font: 7px/9px ${UI_FONT};
    color: #5f7a94;
    background-color: #cbdcea;
`;

const SheetBody = styled.div`
    flex: 1;
    display: flex;
    flex-direction: column;
    min-width: 0;
`;

const Results = styled.div`
    flex: 1;
    padding: 2px 3px;
    border: 1px solid #777;
    border-right: 2px solid #999;
    font: 7px/10px ${SEGOE_FONT};
    background-color: #fff;
`;

const StatusBar = styled.footer`
    display: flex;
    justify-content: flex-end;
    gap: 1px;
    height: 13px;
    padding: 1px 0;
    font: 7px/10px ${SEGOE_FONT};
    background-color: #f0f0f0;
`;

const StatusCell = styled.span`
    width: ${props => props.$width}px;
    padding-left: 1px;
    border-top: 1px solid #aaa;
    border-left: 1px solid #aaa;
`;

const Taskbar = styled.footer`
    display: flex;
    align-items: center;
    gap: 2px;
    height: 24px;
    padding-left: 4px;
    background: linear-gradient(100deg, #0d1216 0, #0a1015 30%, #1a2126 37%, #0a1116 50%, #1b2227 55%, #090f14 64%, #151c21 70%, #080d12 85%);
`;

const StartButton = styled.button`
    width: 26px;
    height: 24px;
`;

const TaskButton = styled.button`
    width: 35px;
    height: 24px;
    border: 1px solid ${props => props.$plain ? "transparent" : "#59636a"};
    border-radius: 2px;
    background: ${props => props.$plain ? "none" : props.$active
        ? "linear-gradient(#a6adb1, #747b80)"
        : "linear-gradient(135deg, #4a5258, #22292e)"};
`;

const Tray = styled.div`
    display: flex;
    align-items: center;
    gap: 6px;
    align-self: stretch;
`;

const Clock = styled.time`
    display: flex;
    flex-direction: column;
    align-items: center;
    width: 43px;
    font: 7px/10px ${SEGOE_FONT};
    color: #fff;
`;

const ShowDesktop = styled.button`
    width: 8px;
    align-self: stretch;
    margin-left: -2px;
    border: 1px solid #3d464c;
    background: linear-gradient(#2a3238, #0e1419);
`;
